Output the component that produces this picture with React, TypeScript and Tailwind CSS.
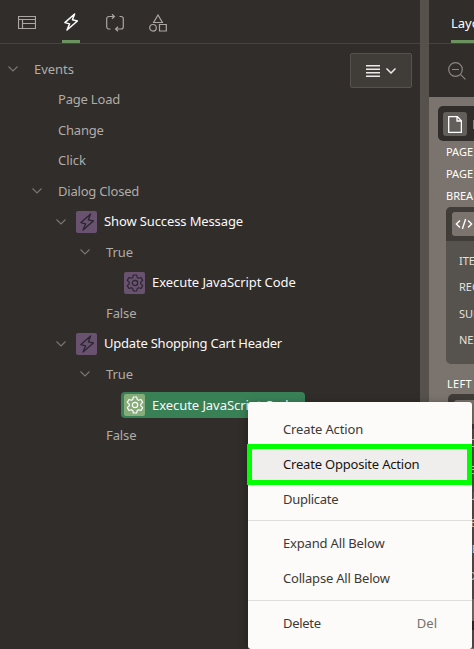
import React from "react";

type IconProps = { className?: string; weight?: number };

const Bolt = ({ className = "", weight = 1.3 }: IconProps) => (
  <svg viewBox="0 0 18 18" className={className} fill="none" stroke="currentColor" strokeWidth={weight} strokeLinejoin="round">
    <path d="M12.6 1 2.900 9.600l4.700 1.300-2.600 6.100L15.400 8l-5-1.200z" />
  </svg>
);

const Gear = ({ className = "" }: IconProps) => (
  <svg viewBox="0 0 18 18" className={className} fill="none" stroke="currentColor" strokeWidth="1.2" strokeLinejoin="round">
    <circle cx="9" cy="9" r="2.7" />
    <path d="M7.300 1h3.400l.5 2.500 1.400.8 2.400-.8 1.700 2.900-1.900 1.700v1.800l1.900 1.700-1.700 2.900-2.400-.8-1.400.8-.5 2.500H7.300l-.5-2.500-1.400-.8-2.400.8-1.700-2.900 1.900-1.700V8.100L1.300 6.400 3 3.500l2.400.8 1.400-.8z" />
  </svg>
);

const Chevron = ({ className = "" }: IconProps) => (
  <svg viewBox="0 0 10 6" className={className} fill="none" stroke="currentColor" strokeWidth="1.1">
    <path d="M.5.5 5 5 9.500.5" />
  </svg>
);

const TableIcon = () => (
  <svg viewBox="0 0 18 14" className="h-[14px] w-[18px]" fill="none" stroke="currentColor">
    <path d="M.5.5h17v12H.5zM.5 3.500h17M4.500 3.500v9M4.500 7.500h13" strokeWidth="1.2" />
  </svg>
);

const LoopIcon = () => (
  <svg viewBox="0 0 18 18" className="h-[18px] w-[18px]" fill="none" stroke="currentColor" strokeWidth="1.2">
    <path d="M4.500 15H3A2.300 2.300 0 0 1 .7 12.700V4.800A2.300 2.300 0 0 1 3 2.500h5M6 .2 8.400 2.500 6 4.800M13.500 2.500H15a2.300 2.300 0 0 1 2.300 2.300v7.900A2.300 2.300 0 0 1 15 15h-5M12 12.700 9.600 15l2.400 2.300" />
  </svg>
);

const ShapesIcon = () => (
  <svg viewBox="0 0 18 18" className="h-[18px] w-[18px]" fill="none" stroke="currentColor" strokeWidth="1.2">
    <path d="M9 1 13.400 8.500H4.600zM10.500 10.500h6.800v6.500h-6.800z" />
    <circle cx="4" cy="13.800" r="3.300" />
  </svg>
);

type Row = {
  label: string;
  indent: string;
  tracking: string;
  open?: boolean;
  icon?: "bolt" | "gear";
  selected?: boolean;
};

const rows: Row[] = [
  { label: "Events", indent: "pl-[8px]", tracking: "tracking-[-0.05px]", open: true },
  { label: "Page Load", indent: "pl-[32px]", tracking: "tracking-[-0.2px]" },
  { label: "Change", indent: "pl-[32px]", tracking: "tracking-[-0.2px]" },
  { label: "Click", indent: "pl-[32px]", tracking: "tracking-[-0.05px]" },
  { label: "Dialog Closed", indent: "pl-[32px]", tracking: "tracking-[-0.2px]", open: true },
  { label: "Show Success Message", indent: "pl-[56px]", tracking: "tracking-[-0.12px]", open: true, icon: "bolt" },
  { label: "True", indent: "pl-[80px]", tracking: "tracking-[-0.1px]", open: true },
  { label: "Execute JavaScript Code", indent: "pl-[101px]", tracking: "tracking-[-0.06px]", icon: "gear" },
  { label: "False", indent: "pl-[80px]", tracking: "tracking-[-0.1px]" },
  { label: "Update Shopping Cart Header", indent: "pl-[56px]", tracking: "tracking-[-0.22px]", open: true, icon: "bolt" },
  { label: "True", indent: "pl-[80px]", tracking: "tracking-[-0.1px]", open: true },
  { label: "Execute JavaScript Code", indent: "pl-[101px]", tracking: "tracking-[-0.06px]", icon: "gear", selected: true },
  { label: "False", indent: "pl-[80px]", tracking: "tracking-[-0.1px]" },
];

function TreeRow({ row }: { row: Row }) {
  return (
    <div className={`flex h-[30.5px] items-center whitespace-nowrap ${row.indent}`}>
      {row.icon !== "gear" && (
        <span className={`shrink-0 text-[#7b7772] ${row.icon ? "w-[20px]" : "w-[26px]"}`}>
          {row.open && <Chevron className="h-[6px] w-[10px]" />}
        </span>
      )}
      <div
        className={`flex items-center rounded-[4px] ${row.selected ? "h-[26px] w-[184px] bg-[#398057]" : ""} ${
          row.icon === "gear" ? "ml-[20px] pl-[3px]" : ""
        }`}
      >
        {row.icon && (
          <span
            className={`mr-[7px] flex h-[22px] w-[21px] shrink-0 items-center justify-center rounded-[2px] ${
              row.selected ? "bg-[#86ac79] text-white" : "bg-[#69526f] text-[#2b2530]"
            }`}
          >
            {row.icon === "bolt" ? <Bolt className="h-[18px] w-[18px]" /> : <Gear className="h-[18px] w-[18px]" />}
          </span>
        )}
        <span
          className={`${row.tracking} ${row.selected ? "pt-[2px]" : ""} ${row.icon ? "text-[#fbf9f8]" : "text-[#b0aca8]"}`}
        >
          {row.label}
        </span>
      </div>
    </div>
  );
}

type MenuItemProps = { label: string; tracking: string; hint?: string };

function MenuItem({ label, tracking, hint }: MenuItemProps) {
  return (
    <div className="flex h-[35px] items-center justify-between px-[35px] text-[#3c3937]">
      <span className={tracking}>{label}</span>
      {hint && <span className="text-[#75716e]">{hint}</span>}
    </div>
  );
}

function ContextMenu() {
  return (
    <div className="absolute top-[402px] left-[248px] h-[247px] w-[224px] rounded-[3px] bg-[#fcfbfa] pt-[10px] whitespace-nowrap shadow-[0_2px_8px_rgba(0,0,0,0.35)]">
      <MenuItem label="Create Action" tracking="tracking-[-0.14px]" />
      <div className="-mt-[3px] -ml-px flex h-[41px] w-[225px] items-center border-[5px] border-[#00ff00] bg-[#f0eeed] pl-[31px] tracking-[-0.2px] text-[#161513]">
        Create Opposite Action
      </div>
      <div className="-mt-[3px]">
        <MenuItem label="Duplicate" tracking="tracking-[-0.28px]" />
      </div>
      <div className="mt-[3px] mb-[5px] border-t border-[#dfdddb]" />
      <MenuItem label="Expand All Below" tracking="tracking-[-0.17px]" />
      <MenuItem label="Collapse All Below" tracking="tracking-[-0.2px]" />
      <div className="mt-[4px] mb-[5px] border-t border-[#dfdddb]" />
      <MenuItem label="Delete" hint="Del" tracking="tracking-[-0.3px]" />
    </div>
  );
}

function LayoutPane() {
  return (
    <section className="flex w-[45px] shrink-0 flex-col overflow-hidden whitespace-nowrap text-white">
      <div className="flex h-[44px] shrink-0 border-b border-[#474340] pl-[22px]">
        <div className="h-[43px] border-b-[3px] border-[#6b925f] pt-[14px] leading-[18px]">Layout</div>
      </div>
      <div className="flex h-[53px] shrink-0 items-center pl-[19px] text-[#8b8681]">
        <svg viewBox="0 0 18 18" className="h-[18px] w-[18px]" fill="none" stroke="currentColor" strokeWidth="1.2">
          <circle cx="7.500" cy="7.500" r="6.800" />
          <path d="M4 7.500h7M12.400 12.400l5 5" />
        </svg>
      </div>
      <div className="flex-1 bg-[#7b736d] pt-[9px] pl-[9px] text-[11px]">
        <div className="flex h-[35px] w-[80px] items-center rounded-[5px] bg-[#312d2a] pt-px pl-[5px]">
          <span className="flex h-[24px] w-[24px] items-center justify-center rounded-[3px] bg-[#625e5a]">
            <svg viewBox="0 0 14 17" className="h-[17px] w-[14px]" fill="none" stroke="currentColor" strokeWidth="1.3">
              <path d="M.7.7h8.700l4 4v11.600H.7zM9 .7V5h4.400" />
            </svg>
          </span>
          <span className="ml-[6px] h-[9px] w-[10px] bg-[#2d9bd8]" />
        </div>
        <div className="flex h-[66px] w-[80px] flex-col pl-[8px] leading-[22px]">
          <span>PAGE</span>
          <span>PAGE</span>
          <span>BREADCRUMB</span>
        </div>
        <div className="ml-[8px] h-[157px] w-[80px] overflow-hidden rounded-[5px] bg-[#56524d] text-[#e4e1dd]">
          <div className="flex h-[34px] items-center bg-[#403c38] pl-[6px]">
            <span className="flex h-[24px] w-[24px] items-center justify-center rounded-[3px] bg-[#7b736d] text-white">
              <svg viewBox="0 0 20 12" className="h-[12px] w-[18px]" fill="none" stroke="currentColor" strokeWidth="1.5">
                <path d="M5.500 2 1.500 6l4 4M14.500 2l4 4-4 4M11.800.5 8.200 11.500" />
              </svg>
            </span>
          </div>
          <div className="flex flex-col pt-[7px] pl-[13px] leading-[26.300px]">
            <span>ITEMS</span>
            <span>REGION</span>
            <span>SUB</span>
            <span>NEXT</span>
          </div>
        </div>
        <div className="pt-[11px] pl-[9px] leading-[18px] tracking-[0.3px]">LEFT</div>
        <div className="mt-px ml-[10px] flex h-[35px] w-[80px] items-center rounded-t-[5px] bg-[#403c38] pl-[6px]">
          <span className="h-[24px] w-[26px] rounded-[3px] bg-[#7b736d]" />
        </div>
        <div className="ml-[10px] flex h-[170px] w-[80px] flex-col bg-[#56524d] pt-px pl-[14px] leading-[26.500px] text-[#e4e1dd]">
          <span>COPY</span>
          <span>REGION</span>
          <span>SUB</span>
          <span>NEXT</span>
          <span>ITEM</span>
          <span>EDGE</span>
        </div>
        <div className="h-[22px]" />
        <div className="ml-[10px] h-[9px] w-[80px] bg-[#312d2a]" />
        <div className="ml-[10px] h-[18px] w-[80px] bg-[#56524d]" />
      </div>
    </section>
  );
}

export default function App() {
  return (
    <div className="relative flex h-[649px] w-[474px] overflow-hidden bg-[#312d2a] font-['Noto_Sans',sans-serif] text-[13px]">
      <section className="flex w-[420px] shrink-0 flex-col">
        <nav className="flex h-[44px] shrink-0 border-b border-[#474340] pl-[18px] text-[#aba6a2]">
          <div className="flex w-[44px] items-center pt-[3px]">
            <TableIcon />
          </div>
          <div className="mr-[26px] flex h-[43px] w-[18px] items-center justify-center border-b-[3px] border-[#6b925f] pt-[4px] text-white">
            <Bolt className="h-[18px] w-[18px] shrink-0" weight={1.5} />
          </div>
          <div className="flex w-[43px] items-center pt-[2px]">
            <LoopIcon />
          </div>
          <div className="flex items-center pt-[2px]">
            <ShapesIcon />
          </div>
        </nav>
        <div className="flex pt-[10px]">
          <div className="w-[350px] shrink-0">
            {rows.map((row, index) => (
              <TreeRow key={index} row={row} />
            ))}
          </div>
          <div className="-mt-px flex h-[35px] w-[62px] items-center justify-center gap-[6px] rounded-[2px] border border-[#57524d] bg-[#403c38] text-[#eceae8]">
            <svg viewBox="0 0 14 12" className="h-[12px] w-[14px]" stroke="currentColor" strokeWidth="1.5">
              <path d="M0 .8h14M0 4.300h14M0 7.800h14M0 11.200h14" />
            </svg>
            <svg viewBox="0 0 10 6" className="h-[6px] w-[10px]" fill="none" stroke="currentColor" strokeWidth="1.5">
              <path d="M.5.5 5 5 9.500.5" />
            </svg>
          </div>
        </div>
      </section>
      <div className="w-[9px] shrink-0 bg-[#56514b]" />
      <LayoutPane />
      <ContextMenu />
    </div>
  );
}
